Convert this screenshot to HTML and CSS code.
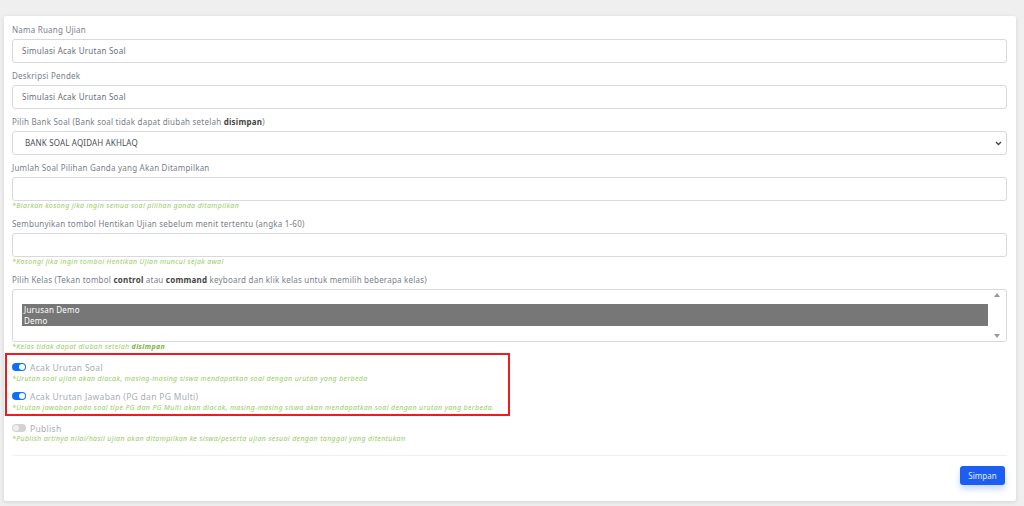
FILE: index.html
```html
<!DOCTYPE html>
<html>
<head>
    <meta charset="UTF-8">
    <title>Ruang Ujian</title>
    <link rel="stylesheet" href="styles.css">
</head>
<body>
    <div class="card">
        <div class="form-group">
            <label class="form-label">Nama Ruang Ujian</label>
            <div class="form-control">Simulasi Acak Urutan Soal</div>
        </div>

        <div class="form-group">
            <label class="form-label">Deskripsi Pendek</label>
            <div class="form-control">Simulasi Acak Urutan Soal</div>
        </div>

        <div class="form-group">
            <label class="form-label">Pilih Bank Soal (Bank soal tidak dapat diubah setelah <b>disimpan</b>)</label>
            <div class="form-control form-select">
                <span>BANK SOAL AQIDAH AKHLAQ</span>
                <svg class="caret" width="7" height="5" viewBox="0 0 7 5"><path d="M1 1 L3.5 3.5 L6 1" fill="none" stroke="#444" stroke-width="1.3"/></svg>
            </div>
        </div>

        <div class="form-group">
            <label class="form-label">Jumlah Soal Pilihan Ganda yang Akan Ditampilkan</label>
            <div class="form-control"></div>
            <small class="help">*Biarkan kosong jika ingin semua soal pilihan ganda ditampilkan</small>
        </div>

        <div class="form-group">
            <label class="form-label">Sembunyikan tombol Hentikan Ujian sebelum menit tertentu (angka 1-60)</label>
            <div class="form-control"></div>
            <small class="help">*Kosongi jika ingin tombol Hentikan Ujian muncul sejak awal</small>
        </div>

        <div class="form-group last">
            <label class="form-label">Pilih Kelas (Tekan tombol <b>control</b> atau <b>command</b> keyboard dan klik kelas untuk memilih beberapa kelas)</label>
            <div class="form-control multi">
                <div class="options">
                    <div class="option">Jurusan Demo</div>
                    <div class="option">Demo</div>
                </div>
                <div class="scroll">
                    <span class="arrow up"></span>
                    <span class="arrow down"></span>
                </div>
            </div>
            <small class="help">*Kelas tidak dapat diubah setelah <b>disimpan</b></small>
        </div>

        <div class="highlight">
            <div class="switch-row">
                <span class="switch on"></span>
                <span class="switch-label">Acak Urutan Soal</span>
            </div>
            <small class="help">*Urutan soal ujian akan diacak, masing-masing siswa mendapatkan soal dengan urutan yang berbeda</small>
            <div class="switch-row">
                <span class="switch on"></span>
                <span class="switch-label">Acak Urutan Jawaban (PG dan PG Multi)</span>
            </div>
            <small class="help">*Urutan jawaban pada soal tipe PG dan PG Multi akan diacak, masing-masing siswa akan mendapatkan soal dengan urutan yang berbeda.</small>
        </div>

        <div class="switch-row publish">
            <span class="switch"></span>
            <span class="switch-label">Publish</span>
        </div>
        <small class="help">*Publish artinya nilai/hasil ujian akan ditampilkan ke siswa/peserta ujian sesuai dengan tanggal yang ditentukan</small>

        <div class="card-footer">
            <button class="btn-primary">Simpan</button>
        </div>
    </div>
</body>
</html>
```

FILE: styles.css
```css
body {
    margin: 0;
    padding-bottom: 6px;
    background-color: #efefef;
    font-family: "Noto Sans", sans-serif;
    font-size: 8px;
    color: #6e7580;
}
.card {
    background-color: white;
    margin: 16px 8px 0 4px;
    padding: 8px 9px 16px 8px;
    border-radius: 2px;
    box-shadow: 0 1px 4px rgba(0,0,0,0.12);
}
.form-group {
    margin-bottom: 7px;
}
.form-group.last {
    margin-bottom: 0;
}
.form-label {
    display: block;
    height: 12px;
    line-height: 12px;
    margin-bottom: 3px;
    letter-spacing: 0.22px;
    color: #7a808a;
}
.form-label b {
    font-weight: bold;
    color: #444;
}
.form-control {
    height: 24px;
    box-sizing: border-box;
    border: 1px solid #d6dae0;
    border-radius: 3px;
    padding: 0 9px;
    line-height: 22px;
    letter-spacing: 0.25px;
    color: #6a707a;
}
.form-select {
    display: flex;
    justify-content: space-between;
    align-items: center;
    padding: 0 4px 0 12px;
    color: #4a4f57;
    letter-spacing: 0.15px;
}
.help {
    display: block;
    height: 10px;
    font-style: italic;
    font-size: 7px;
    line-height: 10px;
    letter-spacing: 0.36px;
    color: #9acb62;
}
.help b {
    font-weight: bold;
    color: #7cb342;
}
.multi {
    height: 53px;
    display: flex;
    padding: 0 0 0 9px;
    line-height: 11px;
    letter-spacing: 0.2px;
}
.options {
    flex: 1;
    padding-top: 14px;
}
.option {
    background-color: #777;
    color: white;
    padding-left: 2px;
    height: 11px;
}
.scroll {
    width: 18px;
    display: flex;
    flex-direction: column;
    justify-content: space-between;
    align-items: center;
    padding: 3px 0;
}
.arrow {
    width: 0;
    height: 0;
    border-left: 3px solid transparent;
    border-right: 3px solid transparent;
}
.arrow.up {
    border-bottom: 4px solid #999;
}
.arrow.down {
    border-top: 4px solid #999;
}
.highlight {
    border: 2px solid #ee1c1c;
    width: 505px;
    box-sizing: border-box;
    margin: 1px 0 0 -7px;
    padding: 6px 5px 1px 5px;
}
.switch-row {
    display: flex;
    align-items: center;
    height: 12px;
}
.highlight .help {
    margin-top: 1px;
    margin-bottom: 6px;
}
.highlight .help:last-child {
    margin-bottom: 0;
}
.switch {
    width: 14px;
    height: 8px;
    border-radius: 4px;
    background-color: #0d6efd;
    position: relative;
    margin-right: 4px;
}
.switch::after {
    content: "";
    position: absolute;
    top: 1px;
    right: 1px;
    width: 6px;
    height: 6px;
    border-radius: 50%;
    background-color: white;
}
.switch:not(.on) {
    background-color: #d2d2d2;
}
.switch:not(.on)::after {
    right: auto;
    left: 1px;
    background-color: #eee;
}
.switch-label {
    font-size: 8.5px;
    letter-spacing: 0.3px;
    color: #a8adb4;
}
.publish {
    margin-top: 6px;
}
.card-footer {
    border-top: 1px solid #f0f0f0;
    margin-top: 11px;
    padding-top: 10px;
    display: flex;
    justify-content: flex-end;
}
.btn-primary {
    background-color: #1d5ef0;
    color: #e4ebff;
    border: none;
    border-radius: 3px;
    font-family: "Noto Sans", sans-serif;
    font-size: 8px;
    width: 45px;
    height: 19px;
    margin-right: 2px;
    box-shadow: 0 4px 6px rgba(29,94,240,0.25);
}
```
